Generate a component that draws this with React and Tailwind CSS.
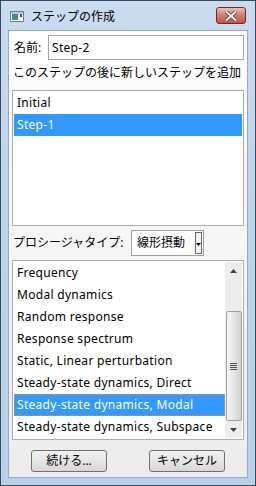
const procedures = [
  'Frequency',
  'Modal dynamics',
  'Random response',
  'Response spectrum',
  'Static, Linear perturbation',
  'Steady-state dynamics, Direct',
  'Steady-state dynamics, Modal',
  'Steady-state dynamics, Subspace',
];

const font = { fontFamily: '"Noto Sans", "Noto Sans CJK JP", sans-serif' };

function WindowIcon() {
  return (
    <svg width="14" height="11" viewBox="0 0 14 11">
      <rect x="0.5" y="0.5" width="13" height="10" fill="#f4f4f4" stroke="#6f7f8f" />
      <rect x="1" y="1" width="12" height="2" fill="#b8c8d8" />
      <rect x="2" y="3" width="6" height="6" fill="#3f8f7f" />
      <rect x="10" y="3" width="2" height="3" fill="#445566" />
    </svg>
  );
}

function CloseButton() {
  return (
    <div className="w-[30px] h-[17px] rounded-[3px] border border-[#6b2a24] bg-gradient-to-b from-[#ecc0b8] via-[#d27a6c] to-[#c0584a] flex items-center justify-center">
      <svg width="12" height="10" viewBox="0 0 12 10">
        <path d="M1.5 1 L10.5 9 M10.5 1 L1.5 9" stroke="#6a3028" strokeWidth="3.4" strokeLinecap="square" />
        <path d="M1.5 1 L10.5 9 M10.5 1 L1.5 9" stroke="#ffffff" strokeWidth="2" strokeLinecap="square" />
      </svg>
    </div>
  );
}

function ScrollBar() {
  return (
    <div className="w-[17px] h-full bg-[#ececec] flex flex-col items-center">
      <div className="h-[17px] w-full flex items-center justify-center">
        <svg width="7" height="4" viewBox="0 0 7 4">
          <path d="M0 4 L3.5 0 L7 4 Z" fill="#404040" />
        </svg>
      </div>
      <div className="h-[32px]" />
      <div className="w-[16px] h-[110px] rounded-[2px] border border-[#a0a0a0] bg-gradient-to-r from-[#f4f4f4] via-[#e6e6e6] to-[#d2d2d2] flex items-center justify-center">
        <div className="flex flex-col gap-[1px]">
          <div className="w-[7px] h-[1px] bg-[#505050]" />
          <div className="w-[7px] h-[1px] bg-[#505050]" />
          <div className="w-[7px] h-[1px] bg-[#505050]" />
          <div className="w-[7px] h-[1px] bg-[#505050]" />
        </div>
      </div>
      <div className="flex-1 w-full flex items-center justify-center">
        <svg width="7" height="4" viewBox="0 0 7 4">
          <path d="M0 0 L7 0 L3.5 4 Z" fill="#404040" />
        </svg>
      </div>
    </div>
  );
}

export default function App() {
  return (
    <div
      className="w-[256px] h-[486px] border border-[#3a4a5c] bg-gradient-to-b from-[#c9dcf0] via-[#bad2ea] to-[#b8d0e9] flex flex-col px-[7px] pb-[7px] text-[12px] text-black"
      style={font}
    >
      <div className="h-[29px] flex items-center pl-[2px] pt-[2px]">
        <WindowIcon />
        <span className="ml-[7px] text-[12px] text-black">ステップの作成</span>
        <div className="ml-auto mr-[2px] -mt-[2px]">
          <CloseButton />
        </div>
      </div>
      <div className="flex-1 border border-[#97aac2] bg-gradient-to-b from-[#ffffff] to-[#ececec] flex flex-col px-[3px]">
        <div className="flex items-center mt-[4px] h-[25px]">
          <span className="ml-[2px] w-[34px]">名前:</span>
          <div className="flex-1 h-[25px] border border-[#a6a6a6] bg-white flex items-center pl-[3px] tracking-[0.3px]">
            Step-2
          </div>
        </div>
        <div className="mt-[5px] h-[16px] flex items-center ml-[1px] whitespace-nowrap">
          このステップの後に新しいステップを追加
        </div>
        <div className="mt-[9px] h-[136px] border border-[#acacac] bg-white p-[1px] tracking-[0.3px]">
          <div className="h-[22px] flex items-center pl-[3px]">Initial</div>
          <div className="h-[22px] flex items-center pl-[3px] bg-[#3399ff] text-white">Step-1</div>
        </div>
        <div className="mt-[4px] h-[26px] flex items-center">
          <span className="ml-[1px] w-[118px] whitespace-nowrap">プロシージャタイプ:</span>
          <div className="w-[73px] h-[26px] border border-[#a0a0a0] bg-white flex items-center pl-[5px] pr-[1px]">
            <span className="flex-1">線形摂動</span>
            <div className="w-[7px] h-[22px] border border-[#6a6a6a] bg-[#f4f4f4] flex items-end justify-center pb-[7px]">
              <svg width="5" height="3" viewBox="0 0 5 3">
                <path d="M0 0 L5 0 L2.5 3 Z" fill="#000" />
              </svg>
            </div>
          </div>
        </div>
        <div className="mt-[4px] h-[180px] border border-[#acacac] bg-white flex p-[1px]">
          <div className="flex-1 flex flex-col tracking-[0.3px]">
            {procedures.map((p, i) =>
              i === 6 ? (
                <div key={p} className="h-[22px] flex items-center pl-[2px] bg-[#3399ff] text-white border border-dotted border-[#e3903f] whitespace-nowrap">
                  {p}
                </div>
              ) : (
                <div key={p} className="h-[22px] flex items-center pl-[3px] whitespace-nowrap">
                  {p}
                </div>
              )
            )}
          </div>
          <ScrollBar />
        </div>
        <div className="mt-[10px] flex">
          <button className="ml-[19px] w-[76px] h-[22px] rounded-[3px] border border-[#707070] bg-gradient-to-b from-[#f2f2f2] to-[#d8d8d8] flex items-center justify-center">
            続ける...
          </button>
          <button className="ml-[42px] w-[76px] h-[22px] rounded-[3px] border border-[#707070] bg-gradient-to-b from-[#f2f2f2] to-[#d8d8d8] flex items-center justify-center">
            キャンセル
          </button>
        </div>
      </div>
    </div>
  );
}
